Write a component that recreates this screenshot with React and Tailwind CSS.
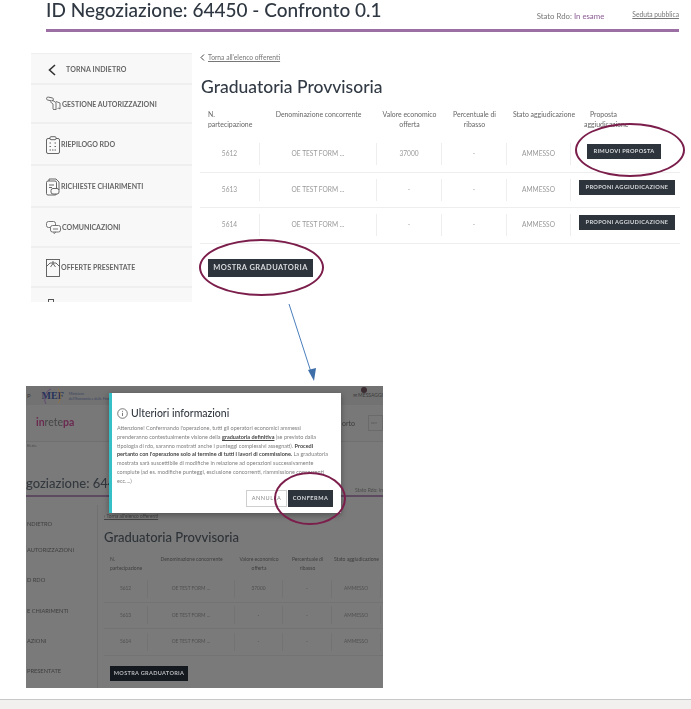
const FONT = { fontFamily: 'Lato, "Noto Sans", sans-serif' };

function KeysIcon() {
  return (
    <svg width="15" height="16" viewBox="0 0 15 16" fill="none" stroke="#666" strokeWidth="0.9">
      <rect x="0.5" y="1.5" width="7" height="3" rx="1.5" transform="rotate(12 4 3)" />
      <path d="M6 4l4 2.5v7.5l-1-1-1 1-1-1V8L4 5.5" />
      <path d="M10 5.5l4 1.5v6l-1.5-1-1 1" />
    </svg>
  );
}
function ClipIcon() {
  return (
    <svg width="14" height="18" viewBox="0 0 14 18" fill="#fafafa" stroke="#555" strokeWidth="0.9">
      <rect x="0.5" y="2.5" width="13" height="15" rx="1.5" />
      <rect x="4" y="0.7" width="6" height="3" rx="1" />
      <path d="M3.5 7h2M8.5 7h2M3.5 10.5h2M8.5 10.5h2M3.5 14h7" strokeDasharray="1.5 1" />
    </svg>
  );
}
function DocsIcon() {
  return (
    <svg width="14" height="18" viewBox="0 0 14 18" fill="#fafafa" stroke="#555" strokeWidth="0.9">
      <path d="M3 3V1h7l3 3v8h-2" />
      <rect x="0.5" y="3" width="10" height="14" rx="1.5" />
      <path d="M3 7h5M3 9.5h3" />
      <rect x="5" y="10.5" width="8" height="5.5" rx="2" />
    </svg>
  );
}
function ChatIcon() {
  return (
    <svg width="15" height="13" viewBox="0 0 15 13" fill="#fafafa" stroke="#666" strokeWidth="0.9">
      <rect x="0.5" y="0.5" width="9" height="6" rx="2" />
      <rect x="4.5" y="4.5" width="10" height="6.5" rx="2" />
      <path d="M7 8h5M8 11v1.5l2-1.5" />
    </svg>
  );
}
function CardIcon() {
  return (
    <svg width="14" height="18" viewBox="0 0 14 18" fill="none" stroke="#555" strokeWidth="0.9">
      <rect x="0.5" y="0.5" width="13" height="17" />
      <path d="M0.5 7.5L4 4M13.5 7.5L10 4M7 2v2.5M4 4h6M7 4.5L4.5 8M7 4.5L9.5 8" />
    </svg>
  );
}

function Ellipse({ className }) {
  return <div className={`absolute rounded-[50%] border-2 border-[#7b1e4b] ${className}`} />;
}

const SIDE = [
  { label: "GESTIONE AUTORIZZAZIONI", icon: <KeysIcon />, h: "h-[39px]" },
  { label: "RIEPILOGO RDO", icon: <ClipIcon />, h: "h-[42px]" },
  { label: "RICHIESTE CHIARIMENTI", icon: <DocsIcon />, h: "h-[42px]" },
  { label: "COMUNICAZIONI", icon: <ChatIcon />, h: "h-[40px]" },
  { label: "OFFERTE PRESENTATE", icon: <CardIcon />, h: "h-[40px]" },
];

function Sidebar() {
  return (
    <aside className="w-[161px] h-[249px] bg-[#f8f8f8] overflow-hidden shrink-0 border-t border-[#eeeeee]">
      <div className="h-[31px] flex items-center pl-[17px] gap-[10px] border-b-2 border-[#efefef] pt-[2px]">
        <svg width="8" height="12" viewBox="0 0 8 12" fill="none" stroke="#333" strokeWidth="1.6"><path d="M7 1L1.5 6 7 11" /></svg>
        <span className="text-[7px] font-bold text-[#666] tracking-[0.1px]">TORNA INDIETRO</span>
      </div>
      {SIDE.map((s) => (
        <div key={s.label} className={`${s.h} flex items-center pl-[15px] gap-[1px] border-b-2 border-[#efefef] pt-[1px]`}>
          {s.icon}
          <span className="text-[7px] font-bold text-[#666] whitespace-nowrap">{s.label}</span>
        </div>
      ))}
      <div className="pl-[17px] pt-[11px]"><div className="w-[6px] h-[3px] border-t border-x border-[#555]" /></div>
    </aside>
  );
}

const COLS = "grid grid-cols-[60px_117px_65px_65px_64px_109px]";

function Row({ id, val, children }) {
  const cell = "flex items-center justify-center h-[22px] border-r border-[#eeeeee]";
  return (
    <div className={`${COLS} items-center h-[35.5px] border-b border-[#eeeeee] w-[480px] text-[6.6px] text-[#999999]`}>
      <div className={cell}>{id}</div>
      <div className={cell}>OE TEST FORM ...</div>
      <div className={cell}>{val}</div>
      <div className={cell}>-</div>
      <div className={cell}>AMMESSO</div>
      <div className="relative h-[22px]">{children}</div>
    </div>
  );
}

function DarkBtn({ children, className = "" }) {
  return (
    <div className={`bg-[#2d343c] text-[#d8dadd] flex items-center justify-center font-bold whitespace-nowrap ${className}`}>{children}</div>
  );
}

function TopShot() {
  return (
    <section className="h-[304px]">
      <header className="mx-[46px] w-[633px] h-[32px] border-b-[3px] border-[#9b6fa3] flex justify-between">
        <h1 className="text-[19px] leading-[20px] text-[#2f3842] font-medium whitespace-nowrap">ID Negoziazione: 64450 - Confronto 0.1</h1>
        <div className="flex gap-[28px] text-[6.7px] text-[#777] pt-[9px]">
          <span className="pt-[2px] text-[7.8px]">Stato Rdo: <span className="text-[#8a5a93]">In esame</span></span>
          <span className="underline">Seduta pubblica</span>
        </div>
      </header>
      <div className="flex pl-[31px] pt-[21px]">
        <Sidebar />
        <main className="pl-[8px] w-[499px] relative">
          <div className="flex items-center gap-[3px] text-[6.7px] text-[#777] h-[9px]">
            <svg width="5" height="7" viewBox="0 0 5 7" fill="none" stroke="#444" strokeWidth="1"><path d="M4 0.5L1 3.5 4 6.5" /></svg>
            <span className="underline">Torna all'elenco offerenti</span>
          </div>
          <h2 className="text-[17.5px] leading-[24px] font-medium text-[#323b45] mt-[13px] ml-[1px] whitespace-nowrap">Graduatoria Provvisoria</h2>
          <div className={`${COLS} text-[6.9px] leading-[10px] text-[#666] text-center mt-[10px] h-[28px] w-[480px]`}>
            <div className="text-left pl-[8px]">N.<br />partecipazione</div>
            <div>Denominazione concorrente</div>
            <div>Valore economico<br />offerta</div>
            <div>Percentuale di<br />ribasso</div>
            <div className="whitespace-nowrap pl-[6px]">Stato aggiudicazione</div>
            <div className="text-left pl-[13px] whitespace-nowrap"><span className="pl-[6px]">Proposta</span><br />aggiudicazione</div>
          </div>
          <Row id="5612" val="37000">
            <DarkBtn className="absolute left-[16px] top-[1px] w-[74px] h-[15px] text-[5.7px] tracking-[0.3px]">RIMUOVI PROPOSTA</DarkBtn>
          </Row>
          <Row id="5613" val="-">
            <DarkBtn className="absolute left-[8px] top-[1px] w-[96px] h-[15px] text-[5.7px] tracking-[0.3px]">PROPONI AGGIUDICAZIONE</DarkBtn>
          </Row>
          <Row id="5614" val="-">
            <DarkBtn className="absolute left-[8px] top-[1px] w-[96px] h-[15px] text-[5.7px] tracking-[0.3px]">PROPONI AGGIUDICAZIONE</DarkBtn>
          </Row>
          <DarkBtn className="ml-[8px] mt-[15px] w-[105px] h-[18px] text-[7.5px] tracking-[0.4px]">MOSTRA GRADUATORIA</DarkBtn>
        </main>
      </div>
    </section>
  );
}

const GREY_COLS = "grid grid-cols-[44px_87px_48px_49px_49px_30px]";

function GreyRow({ id, val }) {
  const cell = "flex items-center justify-center h-[18px] border-r border-[#737373]";
  return (
    <div className={`${GREY_COLS} items-center h-[26.5px] border-b border-[#737373] w-[285px] text-[4.8px] text-[#505050]`}>
      <div className={cell}>{id}</div>
      <div className={cell}>OE TEST FORM ...</div>
      <div className={cell}>{val}</div>
      <div className={cell}>-</div>
      <div className={cell}>AMMESSO</div>
      <div />
    </div>
  );
}

function BottomShot() {
  const sideRows = [
    ["NDIETRO", "h-[26px]"],
    ["AUTORIZZAZIONI", "h-[30px]"],
    ["D RDO", "h-[31px]"],
    ["E CHIARIMENTI", "h-[30px]"],
    ["AZIONI", "h-[30px]"],
    ["PRESENTATE", "h-[31px]"],
  ];
  return (
    <div className="ml-[26px] mt-[82px] w-[357px] h-[302px] relative">
      <div className="w-full h-full bg-[#7a7a7a] overflow-hidden text-[#3a3a3a]">
        <div className="h-[19px] bg-[#727272] flex items-center relative">
          <span className="ml-[1px] text-[6px]">P</span>
          <span className="relative ml-[11px] text-[10px] text-[#26335a] font-bold leading-none" style={{ fontFamily: '"Liberation Serif", serif' }}>
            MEF
            <svg className="absolute -left-[2px] -top-[4px]" width="24" height="18" viewBox="0 0 24 18" fill="none" strokeWidth="0.7">
              <path d="M6 17C3 12 5 4 11 2" stroke="#5a3a70" />
              <path d="M18 2c4 4 3 11 0 14" stroke="#a07030" />
            </svg>
          </span>
          <span className="ml-[5px] text-[3.6px] leading-[5px] text-[#3a4560] whitespace-nowrap">Ministero<br />dell'Economia e delle Finanze</span>
          <span className="ml-auto text-[5px] whitespace-nowrap relative">
            ✉ MESSAGGI
            <span className="absolute left-[8px] -top-[5px] w-[6px] h-[6px] rounded-full bg-[#3a2c30]" />
          </span>
        </div>
        <div className="h-[37px] bg-[#787878] flex items-center border-b border-[#707070]">
          <span className="ml-[10px] text-[10.5px] font-bold text-[#6b2a50]">in<span className="font-normal text-[#454545]">rete</span>pa</span>
          <span className="ml-auto text-[7px] pr-[13px]">orto</span>
          <span className="w-[15px] h-[16px] border border-[#6a6a6a] text-[4.5px] flex items-center pl-[2px] text-[#555]">cer</span>
        </div>
        <div className="h-[9px] text-[4px] pl-[1px] text-[#4c4c4c] leading-[7px]">fferte</div>
        <div className="h-[54px]">
          <div className="h-[46px] border-b-2 border-[#5d4a60] flex justify-between items-end">
            <span className="text-[13px] leading-[24px] font-medium text-[#33383e] whitespace-nowrap">goziazione: 64450</span>
            <span className="text-[5px] leading-[8px] pb-[1px] whitespace-nowrap text-[#4c4c4c]">Stato Rdo: In</span>
          </div>
        </div>
        <div className="flex">
          <div className="w-[72px] shrink-0 pt-[13px] border-r border-[#707070] h-[200px]">
            {sideRows.map(([t, h]) => (
              <div key={t} className={`${h} text-[5.7px] leading-[11px] pl-[1px] text-[#3e3e3e] whitespace-nowrap`}>{t}</div>
            ))}
          </div>
          <div className="pl-[6px] w-[285px]">
            <div className="text-[4.8px] leading-[9px] underline text-[#444] mt-[7px] h-[9px]">‹ Torna all'elenco offerenti</div>
            <div className="text-[13px] leading-[20px] font-medium text-[#2e3338] mt-[6px] whitespace-nowrap">Graduatoria Provvisoria</div>
            <div className={`${GREY_COLS} w-[285px] text-[5px] leading-[8.5px] text-center text-[#3f3f3f] mt-[8px] h-[21px]`}>
              <div className="text-left pl-[6px]">N.<br />partecipazione</div>
              <div>Denominazione concorrente</div>
              <div>Valore economico<br />offerta</div>
              <div>Percentuale di<br />ribasso</div>
              <div className="whitespace-nowrap">Stato aggiudicazione</div>
            </div>
            <GreyRow id="5612" val="37000" />
            <GreyRow id="5613" val="-" />
            <GreyRow id="5614" val="-" />
            <div className="ml-[6px] mt-[10px] w-[78px] h-[15px] bg-[#14191f] text-[#b8babd] text-[5.6px] tracking-[0.3px] font-bold flex items-center justify-center whitespace-nowrap">MOSTRA GRADUATORIA</div>
          </div>
        </div>
      </div>
      <div className="absolute left-[83px] top-[7px] w-[232px] h-[120px] bg-white border-l-[3px] border-[#35c0c8] shadow-[0_2px_6px_rgba(0,0,0,0.35)] pl-[5px] pt-[13px] text-[#666]">
        <div className="flex items-center gap-[3px]">
          <svg width="11" height="11" viewBox="0 0 11 11" fill="none" stroke="#444" strokeWidth="0.7"><circle cx="5.5" cy="5.5" r="4.8" /><path d="M5.5 4.8v3.2M5.5 2.8v1" /></svg>
          <span className="text-[10.5px] leading-[14px] font-medium text-[#343a42] whitespace-nowrap">Ulteriori informazioni</span>
        </div>
        <p className="text-[5.5px] leading-[8.8px] mt-[4px] text-[#808080] whitespace-nowrap">
          Attenzione! Confermando l'operazione, tutti gli operatori economici ammessi<br />
          prenderanno contestualmente visione della <b className="underline text-[#444]">graduatoria definitiva</b> (se previsto dalla<br />
          tipologia di rdo, saranno mostrati anche i punteggi complessivi assegnati). <b className="text-[#444]">Procedi</b><br />
          <b className="text-[#444]">pertanto con l'operazione solo al termine di tutti i lavori di commissione.</b> La graduatoria<br />
          mostrata sarà suscettibile di modifiche in relazione ad operazioni successivamente<br />
          compiute (ad es. modifiche punteggi, esclusione concorrenti, riammissione concorrenti<br />
          ecc....)
        </p>
        <div className="absolute right-[8px] top-[97px] flex gap-[1px]">
          <div className="w-[41px] h-[17px] border border-[#cfcfcf] text-[5.6px] tracking-[0.5px] text-[#888] flex items-center justify-center">ANNULLA</div>
          <div className="w-[45px] h-[17px] bg-[#2d343c] text-[#d8dadd] text-[5.6px] tracking-[0.5px] font-bold flex items-center justify-center">CONFERMA</div>
        </div>
      </div>
      <Ellipse className="left-[248px] top-[86px] w-[72px] h-[53px]" />
    </div>
  );
}

export default function App() {
  return (
    <div className="relative w-[691px] h-[709px] bg-white overflow-hidden" style={FONT}>
      <div className="blur-[0.35px]">
        <TopShot />
        <BottomShot />
      </div>
      <Ellipse className="left-[575px] top-[123px] w-[110px] h-[54px]" />
      <Ellipse className="left-[199px] top-[239px] w-[125px] h-[57px]" />
      <svg className="absolute left-[284px] top-[302px]" width="36" height="82" viewBox="0 0 36 82" fill="none">
        <path d="M5 2L27 70" stroke="#4a7ebb" strokeWidth="1" />
        <path d="M24 68l6 11 2-13z" fill="#3f6fa8" />
      </svg>
      <div className="absolute left-0 right-0 bottom-0 h-[10px] bg-[#f1f0ee] border-t border-[#c8c8c8]" />
    </div>
  );
}
